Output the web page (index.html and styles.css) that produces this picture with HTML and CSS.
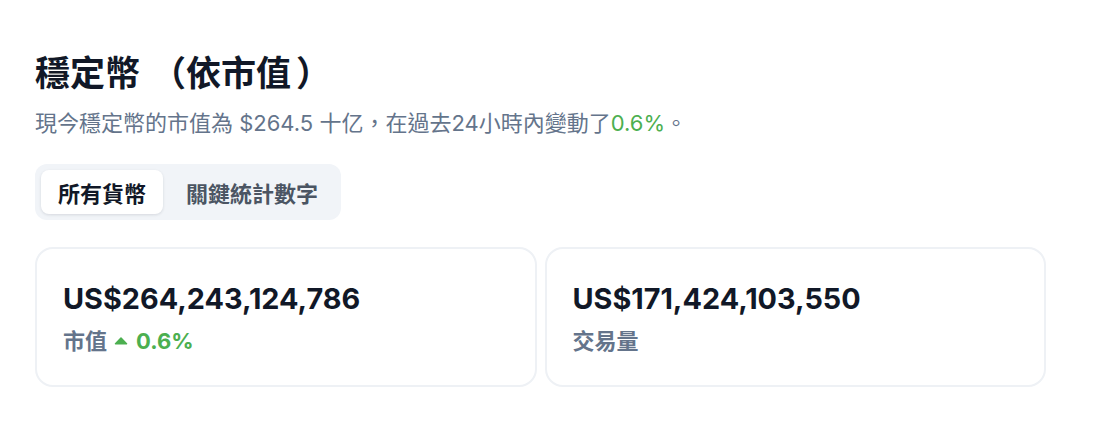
FILE: index.html
```html
<!DOCTYPE html>
<html lang="zh-Hant">
<head>
<meta charset="utf-8">
<link rel="stylesheet" href="styles.css">
</head>
<body>
<main class="page">
  <h1 class="title">穩定幣<span class="po">（</span>依市值<span class="pc">）</span></h1>
  <p class="subtitle">現今穩定幣的市值為 $264.5 十亿，在過去24小時內變動了<span class="up">0.6%</span>。</p>
  <div class="tabs">
    <button class="tab active">所有貨幣</button>
    <button class="tab">關鍵統計數字</button>
  </div>
  <div class="cards">
    <div class="card">
      <div class="value">US$264,243,124,786</div>
      <div class="label">市值 <span class="change"><svg class="caret" viewBox="0 0 14 8" width="14" height="8"><path d="M7 1 L12.5 6.8 L1.5 6.8 Z" fill="#4caf50" stroke="#4caf50" stroke-width="1.5" stroke-linejoin="round"/></svg>0.6%</span></div>
    </div>
    <div class="card">
      <div class="value">US$171,424,103,550</div>
      <div class="label">交易量</div>
    </div>
  </div>
</main>
</body>
</html>
```

FILE: styles.css
```css
* { box-sizing: border-box; }
body {
  margin: 0;
  background: #ffffff;
  font-family: Inter, "Noto Sans CJK TC", sans-serif;
  color: #0f172a;
}
.page {
  padding: 52px 0 0 35px;
  width: 1046px;
}
.title {
  margin: 0;
  font-size: 35px;
  line-height: 42px;
  font-weight: 700;
  color: #111827;
}
.po, .pc {
  display: inline-block;
}
.po { width: 46px; text-align: right; padding-right: 0; }
.pc { width: 30px; text-align: left; padding-left: 5px; }
.subtitle {
  margin: 14px 0 0;
  font-size: 22px;
  line-height: 30px;
  color: #64748b;
}
.up { color: #4caf50; }
.tabs {
  margin-top: 26px;
  display: inline-flex;
  gap: 6px;
  padding: 6px;
  background: #f1f4f8;
  border-radius: 12px;
}
.tab {
  border: 0;
  background: transparent;
  font-family: inherit;
  font-size: 22px;
  font-weight: 700;
  color: #4b5563;
  height: 44px;
  padding: 0 17px;
  border-radius: 8px;
  cursor: pointer;
}
.tab.active {
  background: #ffffff;
  color: #111827;
  box-shadow: 0 1px 3px rgba(15, 23, 42, 0.12);
}
.cards {
  margin-top: 27px;
  display: grid;
  grid-template-columns: 1fr 1fr;
  gap: 8px;
}
.card {
  height: 140px;
  border: 2px solid #eef1f5;
  border-radius: 18px;
  padding: 31px 26px 0;
}
.value {
  font-size: 28.8px;
  line-height: 38px;
  font-weight: 700;
  color: #111827;
}
.label {
  margin-top: 8px;
  font-size: 22px;
  line-height: 30px;
  font-weight: 700;
  color: #64748b;
  display: flex;
  align-items: center;
  gap: 7px;
}
.change {
  display: inline-flex;
  align-items: center;
  gap: 8px;
  color: #4caf50;
}
```
